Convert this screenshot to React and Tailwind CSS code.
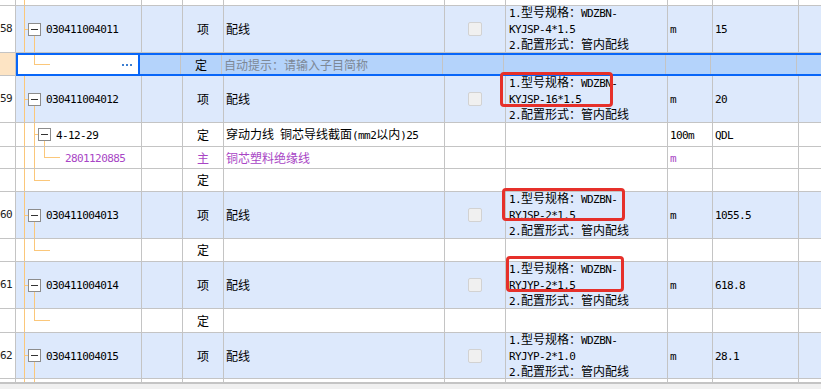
const GRID = 'border-[#c4c4c4]'
const LINE = '#fbc77a'

// ascii runs are drawn in a narrow mono face, the rest in the CJK face
function Txt({ s }) {
  return s
    .split(/([\x20-\x7e]+)/)
    .filter(Boolean)
    .map((p, i) =>
      /^[\x20-\x7e]+$/.test(p) ? (
        <span key={i} className="font-['DejaVu_Sans_Mono',monospace] text-[11px] tracking-[-0.6px]">{p}</span>
      ) : (
        <span key={i}>{p}</span>
      )
    )
}

function Tree({ kind, h, shift = 0 }) {
  const H = h
  const m = Math.floor(H / 2)
  const v = (x, y1, y2, k) => <line key={k} x1={x - shift} x2={x - shift} y1={y1} y2={y2} stroke={LINE} />
  const hz = (x1, x2, k) => <line key={k} x1={x1 - shift} x2={x2 - shift} y1={m + 0.5} y2={m + 0.5} stroke={LINE} />
  const box = (x, k) => (
    <g key={k}>
      <rect x={x + 0.5 - shift} y={m - 5.5} width="12" height="12" fill="white" stroke="#8c8c8c" />
      <line x1={x + 3 - shift} x2={x + 10 - shift} y1={m + 0.5} y2={m + 0.5} stroke="#333" />
    </g>
  )
  const parts = {
    top: [v(8.5, 0, H, 'a')],
    l1: [v(8.5, 0, H, 'a'), hz(8, 12, 'b'), v(18.5, m + 6, H, 'c'), box(12, 'd')],
    l2box: [v(8.5, 0, H, 'a'), v(18.5, 0, H, 'b'), hz(18, 22, 'c'), v(28.5, m + 6, H, 'd'), box(22, 'e')],
    l3: [v(8.5, 0, H, 'a'), v(18.5, 0, H, 'b'), v(28.5, 0, m + 0.5, 'c'), hz(28, 44, 'd')],
    l2last: [v(8.5, 0, H, 'a'), v(18.5, 0, m + 0.5, 'b'), hz(18, 34, 'c')],
    sel: [v(18.5, 0, m + 0.5, 'b'), hz(18, 34, 'c')],
    bottom: [v(8.5, 0, H, 'a'), v(18.5, 0, H, 'b')],
  }
  return (
    <svg className="absolute left-0 top-0" width="126" height={H}>
      {parts[kind]}
    </svg>
  )
}

const rows = [
  { h: 6, hc: 'h-[6px]', tree: 'top' },
  { h: 47, hc: 'h-[47px]', blue: true, num: '58', tree: 'l1', code: '030411004011', type: '项', name: '配线', spec: 'KYJSP-4*1.5', unit: 'm', qty: '15' },
  { sel: true },
  { h: 47, hc: 'h-[47px]', blue: true, num: '59', tree: 'l1', code: '030411004012', type: '项', name: '配线', spec: 'KYJSP-16*1.5', unit: 'm', qty: '20' },
  { h: 24, hc: 'h-[24px]', tree: 'l2box', code: '4-12-29', pad: 'pl-[40px]', type: '定', name: '穿动力线 铜芯导线截面(mm2以内)25', unit: '100m', qty: 'QDL' },
  { h: 22, hc: 'h-[22px]', tree: 'l3', code: '2801120885', pad: 'pl-[49px]', purple: true, type: '主', name: '铜芯塑料绝缘线', unit: 'm' },
  { h: 23, hc: 'h-[23px]', tree: 'l2last', type: '定' },
  { h: 47, hc: 'h-[47px]', blue: true, num: '60', tree: 'l1', code: '030411004013', type: '项', name: '配线', spec: 'RYJSP-2*1.5', unit: 'm', qty: '1055.5' },
  { h: 23, hc: 'h-[23px]', tree: 'l2last', type: '定' },
  { h: 47, hc: 'h-[47px]', blue: true, num: '61', tree: 'l1', code: '030411004014', type: '项', name: '配线', spec: 'RYJYP-2*1.5', unit: 'm', qty: '618.8' },
  { h: 24, hc: 'h-[24px]', tree: 'l2last', type: '定' },
  { h: 46, hc: 'h-[46px]', blue: true, num: '62', tree: 'l1', code: '030411004015', type: '项', name: '配线', spec: 'RYJYP-2*1.0', unit: 'm', qty: '28.1' },
  { h: 3, hc: 'h-[3px]', tree: 'bottom', open: true },
]

function Row({ r }) {
  const bg = r.blue ? 'bg-[#dde9fc]' : 'bg-white'
  const ink = r.purple ? 'text-[#a845c5]' : 'text-black'
  const cell = `shrink-0 h-full border-r ${GRID} flex items-center`
  return (
    <div className={`flex ${r.hc} ${r.open ? '' : `border-b ${GRID}`}`}>
      <div className={`${cell} w-[16px] bg-white justify-end pr-[3px] text-[#222]`}>
        {r.num && <Txt s={r.num} />}
      </div>
      <div className={`${cell} ${bg} relative w-[126px] ${r.pad || 'pl-[30px]'} ${ink}`}>
        <Tree kind={r.tree} h={r.h - (r.open ? 0 : 1)} />
        {r.code && <span className="relative"><Txt s={r.code} /></span>}
      </div>
      <div className={`${cell} ${bg} w-[41px]`} />
      <div className={`${cell} ${bg} w-[41px] justify-center ${ink}`}>{r.type}</div>
      <div className={`${cell} ${bg} w-[221px] pl-[2px] ${ink}`}>{r.name && <span><Txt s={r.name} /></span>}</div>
      <div className={`${cell} ${bg} w-[61px] justify-center`}>
        {r.spec && <div className="h-[14px] w-[14px] rounded-[2px] border border-[#d2d2d2] bg-[#f0f0f0]" />}
      </div>
      <div className={`${cell} ${bg} w-[162px] pl-[3px] leading-[14px]`}>
        {r.spec && (
          <div>
            <div><Txt s="1.型号规格：WDZBN-" /></div>
            <div><Txt s={r.spec} /></div>
            <div><Txt s="2.配置形式：管内配线" /></div>
          </div>
        )}
      </div>
      <div className={`${cell} ${bg} w-[45px] pl-[2px] ${ink}`}>{r.unit && <span><Txt s={r.unit} /></span>}</div>
      <div className={`${cell} ${bg} w-[86px] pl-[2px]`}>{r.qty && <span><Txt s={r.qty} /></span>}</div>
      <div className={`h-full flex-1 ${bg}`} />
    </div>
  )
}

function SelectedRow() {
  const cell = `shrink-0 h-full border-r ${GRID}`
  return (
    <div className="flex h-[23px]">
      <div className={`shrink-0 h-full w-[16px] border-r border-b ${GRID} bg-[#fde4c4]`} />
      <div className="flex h-full flex-1 border-y-2 border-l-2 border-[#0866f8] bg-[#b4d3fb]">
        <div className="relative flex h-full w-[122px] shrink-0 items-center justify-end border-r-2 border-[#0866f8] bg-white pr-[6px]">
          <Tree kind="sel" h={19} shift={2} />
          <div className="flex gap-[2px]">
            <div className="h-[2px] w-[2px] bg-[#3d7fd1]" />
            <div className="h-[2px] w-[2px] bg-[#3d7fd1]" />
            <div className="h-[2px] w-[2px] bg-[#3d7fd1]" />
          </div>
        </div>
        <div className={`${cell} w-[41px]`} />
        <div className={`${cell} flex w-[41px] items-center justify-center text-black`}>定</div>
        <div className={`${cell} flex w-[221px] items-center pl-[2px] text-[#7d8896]`}>自动提示：请输入子目简称</div>
        <div className={`${cell} w-[61px]`} />
        <div className={`${cell} w-[162px]`} />
        <div className={`${cell} w-[45px]`} />
        <div className={`${cell} w-[86px]`} />
        <div className="h-full flex-1" />
      </div>
    </div>
  )
}

export default function App() {
  return (
    <div className="relative h-[389px] w-[821px] overflow-hidden bg-white font-['Noto_Sans_CJK_SC',sans-serif] text-[12px] leading-[14px] text-black">
      {rows.map((r, i) => (r.sel ? <SelectedRow key={i} /> : <Row key={i} r={r} />))}
      <div className="h-[2px] bg-[#c4c4c4]" />
      <div className="h-[10px] bg-[#f0f0f0]" />

      {/* red annotation frames */}
      <div className="absolute left-[500px] top-[72px] h-[35px] w-[113px] rounded-[4px] border-[3px] border-[#e6302a]" />
      <div className="absolute left-[502px] top-[188px] h-[33px] w-[123px] rounded-[4px] border-[3px] border-[#e6302a]" />
      <div className="absolute left-[506px] top-[256px] h-[36px] w-[118px] rounded-[4px] border-[3px] border-[#e6302a]" />
    </div>
  )
}
